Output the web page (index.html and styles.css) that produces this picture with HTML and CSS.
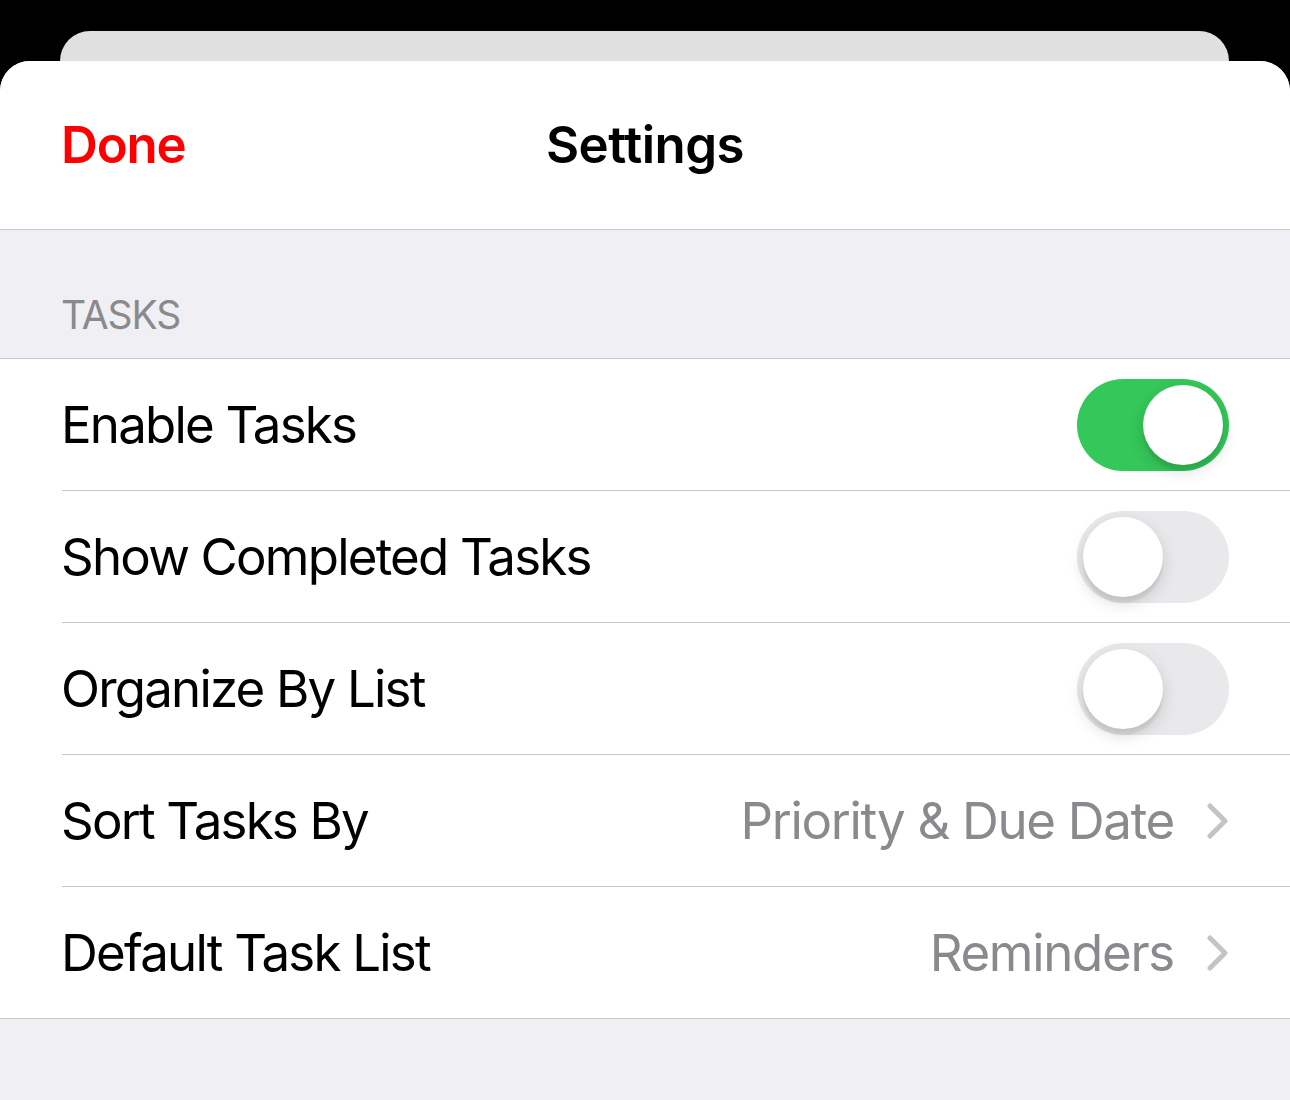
FILE: index.html
```html
<!DOCTYPE html>
<html lang="en">
<head>
  <meta charset="UTF-8" />
  <meta name="viewport" content="width=device-width, initial-scale=1.0" />
  <title>Settings</title>
  <link rel="stylesheet" href="styles.css">
</head>
<body>
  <div class="backdrop"></div>
  <div class="sheet">
    <div class="nav">
      <span class="nav-done">Done</span>
      <span class="nav-title">Settings</span>
      <span></span>
    </div>

    <div class="section-header">TASKS</div>

    <div class="group">
      <div class="row">
        <div class="row-inner">
          <span class="row-label">Enable Tasks</span>
          <span class="toggle on"><span class="knob"></span></span>
        </div>
      </div>
      <div class="row">
        <div class="row-inner">
          <span class="row-label">Show Completed Tasks</span>
          <span class="toggle"><span class="knob"></span></span>
        </div>
      </div>
      <div class="row">
        <div class="row-inner">
          <span class="row-label">Organize By List</span>
          <span class="toggle"><span class="knob"></span></span>
        </div>
      </div>
      <div class="row">
        <div class="row-inner">
          <span class="row-label">Sort Tasks By</span>
          <span class="row-value">Priority &amp; Due Date
            <svg class="chevron" viewBox="0 0 22 36" width="22" height="36"><path d="M3 3 L18 18 L3 33" fill="none" stroke="currentColor" stroke-width="5" stroke-linecap="round" stroke-linejoin="round"/></svg>
          </span>
        </div>
      </div>
      <div class="row">
        <div class="row-inner">
          <span class="row-label">Default Task List</span>
          <span class="row-value">Reminders
            <svg class="chevron" viewBox="0 0 22 36" width="22" height="36"><path d="M3 3 L18 18 L3 33" fill="none" stroke="currentColor" stroke-width="5" stroke-linecap="round" stroke-linejoin="round"/></svg>
          </span>
        </div>
      </div>
    </div>
  </div>
</body>
</html>
```

FILE: styles.css
```css
/* Base */
* {
  box-sizing: border-box;
  margin: 0;
  padding: 0;
}
body {
  background: #000;
  font-family: 'Inter', 'Noto Sans', sans-serif;
  color: #000;
  height: 1100px;
  overflow: hidden;
}

/* Card behind the sheet */
.backdrop {
  height: 30px;
  margin: 31px 61px 0 60px;
  background: #e0e0e0;
  border-radius: 30px 30px 0 0;
}

/* Sheet */
.sheet {
  background: #f0eff4;
  border-radius: 30px 30px 0 0;
  height: 1039px;
  overflow: hidden;
}
.nav {
  height: 169px;
  background: #fff;
  border-bottom: 1px solid #c6c6c8;
  display: grid;
  grid-template-columns: 1fr auto 1fr;
  align-items: center;
  padding: 0 61px 2px;
  font-size: 51px;
  font-weight: 600;
  letter-spacing: -0.5px;
}
.nav-done {
  color: #ff0000;
  letter-spacing: -1.2px;
}

/* Section header */
.section-header {
  height: 128px;
  display: flex;
  align-items: flex-end;
  padding: 0 61px 20px;
  font-size: 39px;
  color: #8a8a8e;
  letter-spacing: -1.1px;
}

/* Rows */
.group {
  background: #fff;
  border-top: 1px solid #c6c6c8;
  border-bottom: 1px solid #c6c6c8;
}
.row {
  padding-left: 62px;
}
.row-inner {
  height: 132px;
  display: flex;
  align-items: center;
  justify-content: space-between;
  padding-right: 61px;
  border-bottom: 1px solid #c6c6c8;
}
.row:last-child .row-inner {
  height: 131px;
  border-bottom: none;
}
.row-label {
  font-size: 51px;
  letter-spacing: -1.8px;
  margin-left: -1px;
}
.row-value {
  display: flex;
  align-items: center;
  gap: 33px;
  font-size: 51px;
  color: #8a8a8e;
  letter-spacing: -1.3px;
}
.chevron {
  color: #c4c4c7;
}

/* Switch */
.toggle {
  position: relative;
  width: 152px;
  height: 92px;
  border-radius: 46px;
  background: #e9e9eb;
}
.toggle.on {
  background: #34c759;
}
.knob {
  position: absolute;
  top: 6px;
  left: 6px;
  width: 80px;
  height: 80px;
  border-radius: 50%;
  background: #fff;
  box-shadow: 0 6px 16px rgba(0, 0, 0, 0.15), 0 6px 2px rgba(0, 0, 0, 0.06);
}
.toggle.on .knob {
  left: 66px;
}
```
